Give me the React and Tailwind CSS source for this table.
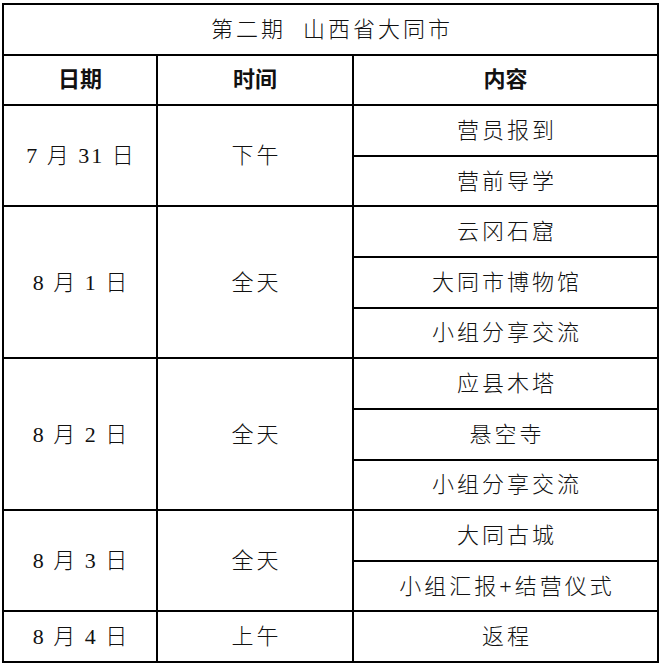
import React from "react";

const font = { fontFamily: '"Liberation Serif", "Noto Sans CJK SC", serif' };

const days = [
  { date: "7 月 31 日", time: "下午", items: ["营员报到", "营前导学"] },
  { date: "8 月 1 日", time: "全天", items: ["云冈石窟", "大同市博物馆", "小组分享交流"] },
  { date: "8 月 2 日", time: "全天", items: ["应县木塔", "悬空寺", "小组分享交流"] },
  { date: "8 月 3 日", time: "全天", items: ["大同古城", "小组汇报+结营仪式"] },
  { date: "8 月 4 日", time: "上午", items: ["返程"] },
];

const spans = {
  1: "row-span-1",
  2: "row-span-2",
  3: "row-span-3",
};

const Cell = ({ className = "", children }) => (
  <div className={`bg-white flex items-center justify-center text-[22px] text-[#111] ${className}`}>
    {children}
  </div>
);

export default function App() {
  return (
    <div className="bg-white w-[663px] h-[665px] pt-[3px] pl-[2px]" style={font}>
      <div className="grid grid-cols-[152px_194px_1fr] grid-rows-[repeat(13,minmax(0,1fr))] gap-[2px] p-[2px] bg-black w-[657px] h-[660px]">
        <Cell className="col-span-3 tracking-[3px] pl-[3px] text-[#2a2a2a] font-light">
          第二期&nbsp;&nbsp;山西省大同市
        </Cell>
        <Cell className="font-bold">日期</Cell>
        <Cell className="font-bold">时间</Cell>
        <Cell className="font-bold">内容</Cell>
        {days.map((d) => (
          <React.Fragment key={d.date}>
            <Cell className={`${spans[d.items.length]} tracking-[2px] pl-[2px] font-light`}>{d.date}</Cell>
            <Cell className={`${spans[d.items.length]} tracking-[3px] pl-[3px] font-light`}>{d.time}</Cell>
            {d.items.map((it, i) => (
              <Cell key={i} className="tracking-[3px] pl-[3px] font-light">
                {it}
              </Cell>
            ))}
          </React.Fragment>
        ))}
      </div>
    </div>
  );
}
